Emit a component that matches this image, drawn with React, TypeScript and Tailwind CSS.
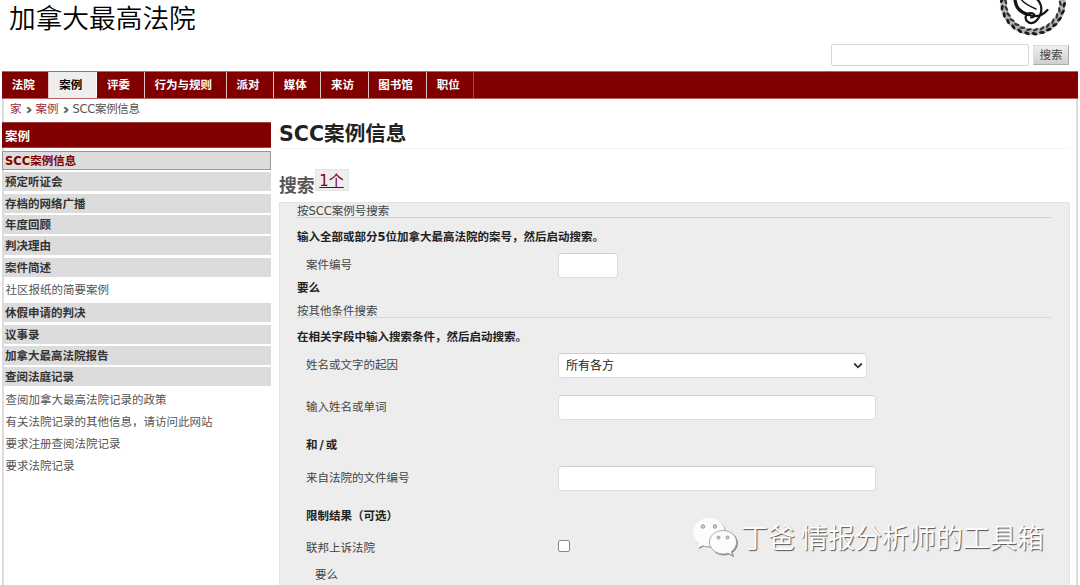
import React from "react";

const navItems = [
  { label: "法院", width: "w-[47px]" },
  { label: "案例", width: "w-[48px]", active: true },
  { label: "评委", width: "w-[47.500px]" },
  { label: "行为与规则", width: "w-[82px]" },
  { label: "派对", width: "w-[47.500px]" },
  { label: "媒体", width: "w-[47px]" },
  { label: "来访", width: "w-[47.500px]" },
  { label: "图书馆", width: "w-[58.500px]" },
  { label: "职位", width: "w-[47px]" },
];

const LEAVES = Array.from({ length: 26 }, (_, i) => (i * 360) / 26);

function Seal() {
  return (
    <svg className="h-[37px] w-[68px]" viewBox="0 0 68 37" fill="none">
      <g transform="translate(34 2.500)">
        <circle r="29.500" stroke="#b4b4b4" strokeWidth="6.500" />
        {LEAVES.map((a) => (
          <g key={a} transform={`rotate(${a}) translate(29.500 0)`}>
            <ellipse cx="-2.300" cy="0" rx="1.200" ry="2.900" transform="rotate(-20)" fill="#333" />
            <ellipse cx="2.400" cy="1.600" rx="1.500" ry="2.900" transform="rotate(20)" fill="#1a1a1a" />
          </g>
        ))}
      </g>
      <g stroke="#151515" strokeLinecap="round">
        <path d="M16 -2C16 6 20 12 29 14.500" strokeWidth="3.200" />
        <path d="M21 -2C25 4 31 6.500 37 9" strokeWidth="1.400" />
        <path d="M35 -3C42 1 43.500 8 41.500 14C39 21 34 25 29 22C24.500 18.500 27 13 31.500 13C36 13 37 17 32 17.500" strokeWidth="2.200" />
        <path d="M28 14C37 18.500 44 15 48.500 10" strokeWidth="2.200" />
      </g>
    </svg>
  );
}

function Chevron() {
  return (
    <svg className="mt-[8px] size-[6px]" viewBox="0 0 6 6" fill="none">
      <path d="M0.800 0.500C3 1 3.300 2 3.600 3C3.300 4 3 5 0.800 5.500M2.500 0.500L5 3L2.500 5.500" stroke="#666" strokeWidth="1.300" />
    </svg>
  );
}

function MenuItem({ children }: { children: React.ReactNode }) {
  return (
    <li className="mb-[2.350px] h-[19px] bg-[#dcdcdc] pl-[3px] leading-[20.500px] font-bold text-[#333]">
      {children}
    </li>
  );
}

function MenuLink({ children }: { children: React.ReactNode }) {
  return <li className="h-[22.200px] pl-[3.500px] leading-[23px] text-[#555]">{children}</li>;
}

function Sidebar() {
  return (
    <aside className="w-[269px] shrink-0">
      <h2 className="h-[26px] border-y border-[#a04040] bg-[#800000] pl-[3px] text-[12.500px] leading-[27px] font-bold text-white">
        案例
      </h2>
      <ul className="mt-[3px]">
        <li className="mb-[2.350px] h-[19px] border border-[#999] bg-[#dcdcdc] pl-[2px] leading-[19px] font-bold text-[#800000]">
          SCC案例信息
        </li>
        <MenuItem>预定听证会</MenuItem>
        <MenuItem>存档的网络广播</MenuItem>
        <MenuItem>年度回顾</MenuItem>
        <MenuItem>判决理由</MenuItem>
        <MenuItem>案件简述</MenuItem>
      </ul>
      <ul className="mb-[2px]">
        <MenuLink>社区报纸的简要案例</MenuLink>
      </ul>
      <ul>
        <MenuItem>休假申请的判决</MenuItem>
        <MenuItem>议事录</MenuItem>
        <MenuItem>加拿大最高法院报告</MenuItem>
        <MenuItem>查阅法庭记录</MenuItem>
      </ul>
      <ul className="mt-px">
        <MenuLink>查阅加拿大最高法院记录的政策</MenuLink>
        <MenuLink>有关法院记录的其他信息，请访问此网站</MenuLink>
        <MenuLink>要求注册查阅法院记录</MenuLink>
        <MenuLink>要求法院记录</MenuLink>
      </ul>
    </aside>
  );
}

const field =
  "block h-[25px] rounded-[4px] border border-[#dcdcdc] border-t-[#d0d0d0] bg-white outline-none";

function Row({ label, children }: { label: string; children: React.ReactNode }) {
  return (
    <div className="flex h-[25px] pl-[9px]">
      <label className="w-[252px] shrink-0 leading-[25px]">{label}</label>
      {children}
    </div>
  );
}

function SearchForm() {
  return (
    <form className="h-[400px] border border-[#e4e4e4] bg-[#ededed] pr-[18px] pl-[17px] text-[#444]">
      <h4 className="h-[15px] border-b border-[#d0d0d0] leading-[16px]">按SCC案例号搜索</h4>
      <p className="h-[35px] leading-[38px] font-bold text-[#222]">
        输入全部或部分5位加拿大最高法院的案号，然后启动搜索。
      </p>
      <Row label="案件编号">
        <input className={`${field} w-[60px]`} />
      </Row>
      <p className="h-6 leading-[20px] font-bold text-[#222]">要么</p>
      <h4 className="h-4 border-b border-[#d8d8d8] leading-[19px]">按其他条件搜索</h4>
      <p className="h-[35px] leading-[38px] font-bold text-[#222]">
        在相关字段中输入搜索条件，然后启动搜索。
      </p>
      <Row label="姓名或文字的起因">
        <div className={`${field} flex w-[309px] items-center justify-between pt-px pr-[3px] pl-[7px] text-[12px] text-[#222]`}>
          <span>所有各方</span>
          <svg className="size-[10px]" viewBox="0 0 10 10" fill="none">
            <path d="M1.200 2.500L5 6.300L8.800 2.500" stroke="#333" strokeWidth="1.800" />
          </svg>
        </div>
      </Row>
      <div className="h-[17px]" />
      <Row label="输入姓名或单词">
        <input className={`${field} w-[318px]`} />
      </Row>
      <p className="h-[46px] pl-[9px] leading-[50px] font-bold text-[#222]">
        和<span className="px-[2px]">/</span>或
      </p>
      <Row label="来自法院的文件编号">
        <input className={`${field} w-[318px]`} />
      </Row>
      <p className="h-[45px] pl-[9px] leading-[50px] font-bold text-[#222]">限制结果（可选）</p>
      <Row label="联邦上诉法院">
        <input
          type="checkbox"
          className="mt-[4px] block size-[12px] appearance-none rounded-[2px] border border-[#888] bg-white"
        />
      </Row>
      <p className="pl-[18px] leading-[28px]">要么</p>
    </form>
  );
}

export default function App() {
  return (
    <div className="relative h-[585px] w-[1080px] overflow-hidden bg-white font-['DejaVu_Sans','Noto_Sans_CJK_SC',sans-serif] text-[11.500px] text-[#555]">
      <header className="flex h-[71px] justify-between pr-[11px] pl-[9px]">
        <h1 className="font-['Noto_Sans_CJK_SC',sans-serif] text-[26.700px] leading-[34px] font-[350] text-black">
          加拿大最高法院
        </h1>
        <div className="flex flex-col items-end">
          <div className="mr-[2px] h-[37px]">
            <Seal />
          </div>
          <div className="mt-[7px] flex gap-[4px]">
            <input className="h-[22px] w-[198px] rounded-[2px] border border-[#d8d8d8] bg-white outline-none" />
            <button className="mt-px h-[20px] w-[36px] border border-[#ddd] border-r-[#aaa] border-b-[#aaa] bg-linear-to-b from-[#eeeeee] to-[#d0d0d0] text-[11.500px] leading-[19px] text-[#444]">
              搜索
            </button>
          </div>
        </div>
      </header>
      <nav className="ml-[2px] flex h-[28px] w-[1076px] border-y border-[#b86060] bg-[#800000] leading-[27.500px] font-bold">
        {navItems.map((item) => (
          <a
            key={item.label}
            className={`${item.width} shrink-0 border-r text-center ${
              item.active ? "border-white bg-[#eeeeee] text-black" : "border-[#e0c4c4] text-white"
            } pr-[3.500px] last:border-[#a04848]`}
          >
            {item.label}
          </a>
        ))}
      </nav>
      <div className="ml-[2px] h-[500px] w-[1076px] border-x-2 border-[#dcdcdc]">
        <div className="flex h-[23px] gap-[4px] pl-[6px] leading-[21.500px]">
          <a className="text-[#962a38]">家</a>
          <Chevron />
          <a className="text-[#962a38]">案例</a>
          <Chevron />
          <span className="tracking-[-0.300px]">SCC案例信息</span>
        </div>
        <div className="-ml-[2px] flex">
          <Sidebar />
          <main className="ml-[8px] w-[791px] shrink-0">
            <h1 className="h-[27px] border-b border-[#f4f4f4] text-[20.600px] leading-[24px] font-bold text-[#222]">
              SCC案例信息
            </h1>
            <h2 className="flex h-[53px] pt-[20px] text-[17.800px] font-bold text-[#555]">
              <span className="leading-[34px]">搜索</span>
              <a className="h-[22px] w-[34px] border border-[#e4e4e4] bg-[#eeeeee] text-center text-[15px] leading-[22px] font-normal text-[#800000] underline">
                1个
              </a>
            </h2>
            <SearchForm />
          </main>
        </div>
      </div>
      <div className="absolute top-[515px] left-[692px] flex items-center gap-[3px]">
        <svg className="h-[40px] w-[46px] drop-shadow-[1px_1px_0.5px_#888]" viewBox="0 0 46 40">
          <path
            d="M17 1C8 1 1 7.500 1 15.500C1 20 3.200 24 7 26.600L5.500 31L11 28.500C13 29 15 29.500 17 29.500C26 29.500 33 23 33 15.500C33 7.500 26 1 17 1Z"
            fill="#fcfcfc"
          />
          <path
            d="M31 13.500C23.500 13.500 17.500 18.500 17.500 25C17.500 31.500 23.500 37 31 37C32.700 37 34.500 36.700 36 36.200L40.500 38.500L39.300 34.600C42.500 32.500 44.500 29 44.500 25C44.500 18.500 38.500 13.500 31 13.500Z"
            fill="#fcfcfc"
            stroke="#999"
            strokeWidth="0.800"
          />
          <g fill="#ddd" stroke="#888">
            <circle cx="11" cy="9.500" r="1.700" />
            <circle cx="23" cy="9.500" r="1.700" />
            <circle cx="26.500" cy="20.500" r="1.400" />
            <circle cx="35.500" cy="20.500" r="1.400" />
          </g>
        </svg>
        <span className="mt-px font-['Noto_Sans_CJK_SC',sans-serif] text-[27px] leading-[42px] font-[350] whitespace-pre text-white [text-shadow:1px_1px_1px_#555]">
          丁爸 情报分析师的工具箱
        </span>
      </div>
    </div>
  );
}
